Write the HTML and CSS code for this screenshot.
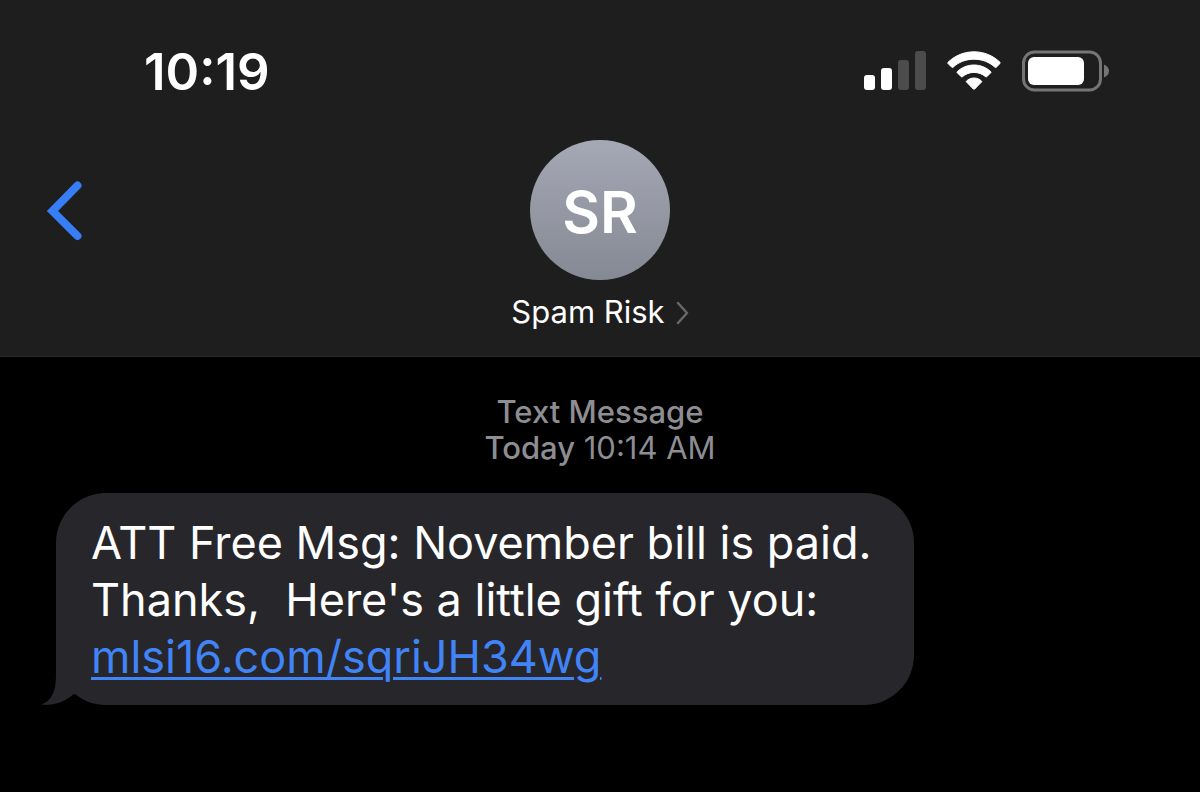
FILE: index.html
```html
<!DOCTYPE html>
<html lang="en">
<head>
<meta charset="utf-8">
<meta name="viewport" content="width=device-width, initial-scale=1">
<title>Spam Risk</title>
<link rel="stylesheet" href="styles.css">
</head>
<body>
<header class="header">
  <div class="status">
    <time class="clock">10:19</time>
    <div class="indicators">
      <svg class="signal" width="62" height="40" viewBox="0 0 62 40" role="img" aria-label="Signal: 2 of 4 bars">
        <rect x="0" y="24" width="11" height="15" rx="3" fill="#fff"/>
        <rect x="17" y="17" width="11" height="22" rx="3" fill="#fff"/>
        <rect x="34" y="9" width="11" height="30" rx="3" fill="#4c4c4c"/>
        <rect x="51" y="0" width="11" height="39" rx="3" fill="#4c4c4c"/>
      </svg>
      <svg class="wifi" width="54" height="40" viewBox="0 0 54 40" role="img" aria-label="Wi-Fi">
        <g fill="#fff" stroke="#fff" stroke-width="1" stroke-linejoin="round">
          <path d="M27 .8C17 .8 7.800 4.700 1 11.300Q.5 12 1 12.500L4.800 16.300Q5.400 16.800 6 16.300C11.600 11 19 8.200 27 8.200S42.400 11 48 16.300Q48.600 16.800 49.200 16.300L53 12.500Q53.500 12 53 11.300C46.200 4.700 37 .8 27 .8Z"/>
          <path d="M27 14C20.600 14 14.700 16.400 10.200 20.700Q9.700 21.200 10.200 21.700L14.300 25.800Q14.800 26.200 15.400 25.700C18.500 23 22.600 21.400 27 21.400S35.500 23 38.600 25.700Q39.200 26.200 39.700 25.800L43.800 21.700Q44.300 21.200 43.800 20.700C39.300 16.400 33.400 14 27 14Z"/>
          <path d="M27 27C24 27 21.500 28.200 19.500 30Q19 30.500 19.500 31L26.300 38Q27 38.700 27.700 38L34.500 31Q35 30.500 34.500 30C32.500 28.200 30 27 27 27Z"/>
        </g>
      </svg>
      <svg class="battery" width="88" height="42" viewBox="0 0 88 42" role="img" aria-label="Battery">
        <rect x="1.500" y="2" width="77" height="38" rx="11" fill="none" stroke="#757575" stroke-width="3"/>
        <rect x="6" y="7" width="56" height="28" rx="6" fill="#fff"/>
        <path d="M82 14.500Q87 16.500 87 21T82 27.500Z" fill="#757575"/>
      </svg>
    </div>
  </div>
  <nav class="nav">
    <button class="back" type="button" aria-label="Back">
      <svg width="36" height="60" viewBox="0 0 36 60" aria-hidden="true"><path d="M31.500 4.500 6.500 30 31.500 55" fill="none" stroke="#377df6" stroke-width="8" stroke-linecap="round" stroke-linejoin="miter"/></svg>
    </button>
    <button class="contact" type="button">
      <span class="avatar" aria-hidden="true">SR</span>
      <span class="name">Spam Risk
        <svg width="14" height="24" viewBox="0 0 14 24" aria-hidden="true"><path d="M3 3 12 13 3 23" fill="none" stroke="#68686b" stroke-width="2.500" stroke-linecap="round" stroke-linejoin="round"/></svg>
      </span>
    </button>
  </nav>
</header>
<main class="thread">
  <p class="stamp"><span class="strong">Text Message</span><br><span class="strong">Today</span> 10:14 AM</p>
  <div class="bubble">
    <svg class="tail" width="50" height="50" viewBox="0 0 50 50" aria-hidden="true"><path d="M15 0V20C15 36 11 46 0 49.500C12 51 24 47 33 39L50 20V0Z" fill="#27262a"/></svg>
    <p class="text">ATT Free Msg: November bill is paid.<br>Thanks,&nbsp; Here's a little gift for you:<br><a class="link" href="#">mlsi16.com/sqriJH34wg</a></p>
  </div>
</main>
</body>
</html>
```
FILE: styles.css
```css
* { box-sizing: border-box; }

body {
  margin: 0;
  min-height: 100vh;
  background: #000;
  color: #fff;
  font-family: Inter, "Liberation Sans", sans-serif;
}

.header {
  background: #1e1e1e;
  border-bottom: 1px solid #2a2a2b;
  padding: 40px 0 24px;
}

.status {
  display: flex;
  justify-content: space-between;
  align-items: center;
  height: 64px;
  padding: 0 90px 0 144px;
}

.clock {
  font-size: 51px;
  font-weight: 600;
  line-height: 64px;
}

.indicators {
  display: flex;
  align-items: center;
  gap: 21px;
  padding-bottom: 2px;
}

.nav {
  display: grid;
  grid-template-columns: 1fr auto 1fr;
  align-items: start;
  padding: 36px 46px 0;
}

button {
  border: 0;
  padding: 0;
  background: none;
  color: inherit;
  font: inherit;
  cursor: pointer;
}

.back {
  justify-self: start;
  padding-top: 41px;
}

.back svg { display: block; }

.contact {
  display: flex;
  flex-direction: column;
  align-items: center;
  gap: 12px;
}

.avatar {
  display: grid;
  place-items: center;
  width: 140px;
  height: 140px;
  padding-top: 4px;
  border-radius: 50%;
  background: linear-gradient(#a5a8b5, #858993);
  font-size: 58px;
  font-weight: 600;
}

.name {
  display: flex;
  align-items: center;
  gap: 10px;
  font-size: 31px;
  line-height: 40px;
}

.thread { padding: 37px 56px; }

.stamp {
  margin: 0;
  color: #8d8d92;
  font-size: 31px;
  line-height: 36px;
  text-align: center;
}

.strong { font-weight: 500; }

.bubble {
  position: relative;
  width: fit-content;
  margin-top: 27px;
  padding: 21px 42px 20px 35px;
  border-radius: 50px;
  background: #27262a;
}

.tail {
  position: absolute;
  left: -15px;
  bottom: 0;
}

.text {
  position: relative;
  margin: 0;
  font-size: 45px;
  line-height: 57px;
}

.link {
  color: #4084f7;
  text-decoration-thickness: 3px;
  text-underline-offset: 4px;
}
```
